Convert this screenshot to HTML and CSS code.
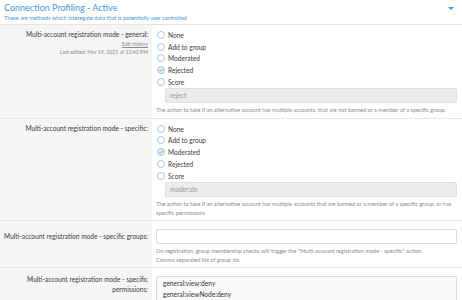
FILE: index.html
```html
<!DOCTYPE html>
<html>
<head>
<meta charset="utf-8">
<link rel="stylesheet" href="styles.css">
</head>
<body>
<div class="block">
  <div class="block-header">
    <div class="title-line">
      <span class="title">Connection Profiling - Active</span>
      <span class="caret"></span>
    </div>
    <div class="subtitle">These are methods which interegate data that is potentially user controlled</div>
  </div>

  <div class="row">
    <div class="label">
      <div>Multi-account registration mode - general:</div>
      <div class="hint"><span class="link">Edit history</span></div>
      <div class="hint">Last edited: Mar 19, 2025 at 12:42 PM</div>
    </div>
    <div class="field">
      <ul class="radios">
        <li><span class="radio"></span>None</li>
        <li><span class="radio"></span>Add to group</li>
        <li><span class="radio"></span>Moderated</li>
        <li><span class="radio checked"><svg viewBox="0 0 8 8" width="8" height="8"><path d="M2.3 4.1 L3.5 5.3 L5.8 2.8" fill="none" stroke="#5a9fd6" stroke-width="0.9"/></svg></span>Rejected</li>
        <li><span class="radio"></span>Score</li>
      </ul>
      <div class="input disabled indent">reject</div>
      <div class="desc">The action to take if an alternative account has multiple accounts, that are not banned or a member of a specific group.</div>
    </div>
  </div>

  <div class="row">
    <div class="label">
      <div>Multi-account registration mode - specific:</div>
    </div>
    <div class="field">
      <ul class="radios">
        <li><span class="radio"></span>None</li>
        <li><span class="radio"></span>Add to group</li>
        <li><span class="radio checked"><svg viewBox="0 0 8 8" width="8" height="8"><path d="M2.3 4.1 L3.5 5.3 L5.8 2.8" fill="none" stroke="#5a9fd6" stroke-width="0.9"/></svg></span>Moderated</li>
        <li><span class="radio"></span>Rejected</li>
        <li><span class="radio"></span>Score</li>
      </ul>
      <div class="input disabled indent">moderate</div>
      <div class="desc">The action to take if an alternative account has multiple accounts that are banned or a member of a specific group, or has specific permissions</div>
    </div>
  </div>

  <div class="row">
    <div class="label label-mid">
      <div class="nowrap">Multi-account registration mode - specific groups:</div>
    </div>
    <div class="field field-pad">
      <div class="input"></div>
      <div class="desc">On registration, group membership checks will trigger the "Multi-account registration mode - specific" action.<br>Comma separated list of group ids</div>
    </div>
  </div>

  <div class="row last">
    <div class="label label-perm">
      <div>Multi-account registration mode - specific<br>permissions:</div>
    </div>
    <div class="field field-pad">
      <div class="textarea">general:view:deny<br>general:viewNode:deny</div>
    </div>
  </div>
</div>
</body>
</html>
```

FILE: styles.css
```css
* { box-sizing: border-box; }
html, body { margin: 0; padding: 0; background: #fff; }
body {
  font-family: Lato, "Noto Sans", sans-serif;
  color: #333;
  width: 462px;
  height: 300px;
  overflow: hidden;
}
.block { width: 462px; }
.block-header {
  padding: 2px 5px 3px 4px;
  border-bottom: 1px solid #e3e3e3;
  height: 25px;
}
.title-line {
  display: flex;
  justify-content: space-between;
  align-items: center;
}
.title {
  color: #4a97d4;
  font-size: 9px;
  line-height: 12px;
}
.caret {
  width: 0; height: 0;
  border-left: 3px solid transparent;
  border-right: 3px solid transparent;
  border-top: 3px solid #4a97d4;
  margin-right: 3px;
}
.subtitle {
  color: #4a97d4;
  font-size: 5.6px;
  line-height: 8px;
}
.row {
  display: grid;
  grid-template-columns: 152px 1fr;
  border-bottom: 1px solid #e6e6e6;
}
.row.last { border-bottom: none; }
.label {
  background: #f5f5f5;
  text-align: right;
  padding: 4px 4px 4px 2px;
  font-size: 6.6px;
  line-height: 11px;
  color: #3c3c3c;
}
.nowrap { white-space: nowrap; }
.label .hint {
  font-size: 5.2px;
  line-height: 8px;
  color: #8c8c8c;
}
.label .link { text-decoration: underline; color: #8c8c8c; }
.label-mid { padding-top: 10px; }
.label-perm { padding-top: 7px; line-height: 9.5px; }
.field {
  padding: 4px 5px 3px 4px;
}
.field-pad { padding-top: 8px; }
.radios { list-style: none; margin: 0; padding: 0; }
.radios li {
  display: flex;
  align-items: center;
  height: 11.7px;
  font-size: 6.6px;
  color: #3c3c3c;
}
.radio {
  width: 8px; height: 8px;
  border: 1px solid #a9c7e2;
  border-radius: 50%;
  margin: 0 3px 0 1px;
  background: #fff;
  flex: none;
  position: relative;
}
.radio svg { position: absolute; left: -1px; top: -1px; }
.radio.checked {
  background: #e3eef8;
  border-color: #a9c7e2;
}
.input {
  height: 15px;
  border: 1px solid #dcdcdc;
  border-radius: 2px;
  background: #fff;
  font-size: 6.6px;
  line-height: 13px;
  padding: 0 4px;
  color: #999;
}
.input.disabled { background: #ececec; border-color: #e0e0e0; }
.indent { margin-left: 9px; margin-top: 1px; }
.desc {
  font-size: 5.6px;
  line-height: 8.5px;
  color: #8c8c8c;
  margin-top: 3px;
}
.textarea {
  height: 40px;
  border: 1px solid #dcdcdc;
  border-radius: 2px;
  background: #fafafa;
  font-size: 6.6px;
  line-height: 11px;
  padding: 1px 6px;
  color: #333;
}
```
